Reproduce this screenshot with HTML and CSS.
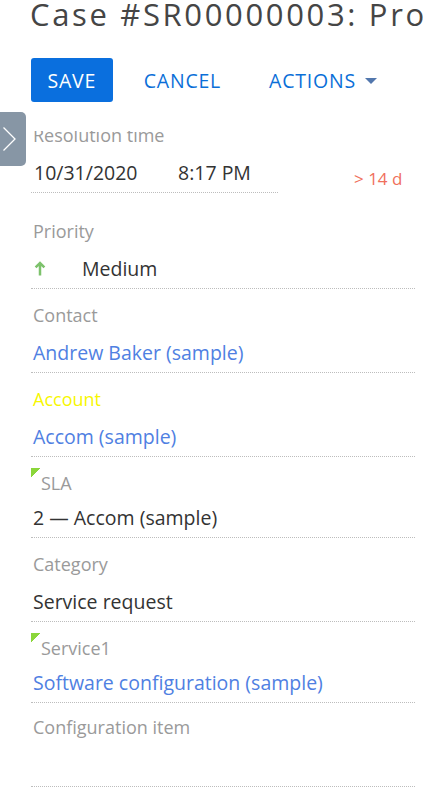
FILE: index.html
```html
<!DOCTYPE html>
<html lang="en">
<head>
<meta charset="utf-8">
<title>Case #SR00000003</title>
<link rel="stylesheet" href="styles.css">
</head>
<body>
<div class="page">
  <header class="head">
    <h1 class="title">Case #SR00000003: Problem with software configuration</h1>
    <div class="toolbar">
      <button class="btn btn-primary">SAVE</button>
      <button class="btn btn-link">CANCEL</button>
      <button class="btn btn-link">ACTIONS<span class="caret"></span></button>
    </div>
  </header>

  <button class="side-tab" aria-label="Expand">
    <svg width="26" height="54" viewBox="0 0 26 54"><polyline points="3.5,15.5 15,27 3.5,38.5" fill="none" stroke="#ffffff" stroke-width="1.3"/></svg>
  </button>

  <main class="form">
    <div class="field-res">
      <div class="label">Resolution time</div>
      <div class="res-row">
        <div class="res-input">
          <span class="res-date">10/31/2020</span>
          <span class="res-time">8:17 PM</span>
        </div>
        <span class="overdue">&gt; 14 d</span>
      </div>
    </div>

    <div class="field">
      <div class="label">Priority</div>
      <div class="value value-priority">
        <span class="prio-icon">
          <svg width="12" height="15" viewBox="0 0 12 15"><path d="M6 14.5V2M1.6 6.4L6 2L10.4 6.4" fill="none" stroke="#7dc26c" stroke-width="2.5"/></svg>
        </span>
        <span>Medium</span>
      </div>
    </div>

    <div class="field">
      <div class="label">Contact</div>
      <div class="value link">Andrew Baker (sample)</div>
    </div>

    <div class="field">
      <div class="label label-warn">Account</div>
      <div class="value link">Accom (sample)</div>
    </div>

    <div class="field field-flagged">
      <div class="label label-flagged"><span class="flag"></span><span>SLA</span></div>
      <div class="value">2 — Accom (sample)</div>
    </div>

    <div class="field">
      <div class="label">Category</div>
      <div class="value">Service request</div>
    </div>

    <div class="field field-flagged">
      <div class="label label-flagged"><span class="flag"></span><span>Service1</span></div>
      <div class="value link">Software configuration (sample)</div>
    </div>

    <div class="field field-last">
      <div class="label">Configuration item</div>
      <div class="value"></div>
    </div>
  </main>
</div>
</body>
</html>
```

FILE: styles.css
```css
html, body {
  margin: 0;
  padding: 0;
  background: #ffffff;
}

body {
  font-family: "Open Sans", "Noto Sans", sans-serif;
  color: #333333;
}

.page {
  position: relative;
  width: 423px;
  overflow: hidden;
}

.head {
  height: 131px;
  background: #ffffff;
}

.title {
  margin: 0;
  padding-left: 30px;
  font-size: 31px;
  line-height: 28px;
  font-weight: 400;
  letter-spacing: 2.65px;
  color: #454545;
  white-space: nowrap;
  overflow: hidden;
}

.toolbar {
  display: flex;
  gap: 14px;
  margin-top: 30px;
  padding-left: 31px;
}

.btn {
  height: 44px;
  padding: 0 17px;
  border: none;
  border-radius: 3px;
  background: transparent;
  font-family: "Open Sans", "Noto Sans", sans-serif;
  font-size: 19.5px;
  letter-spacing: 0.8px;
  color: #0b6fd8;
  display: flex;
  align-items: center;
  cursor: pointer;
}

.btn-primary {
  background: #0a6fde;
  color: #ffffff;
  padding: 0 16.5px;
}

.btn-link {
  padding: 0 17px;
}

.caret {
  width: 0;
  height: 0;
  margin-left: 9px;
  margin-top: 1px;
  border-left: 6px solid transparent;
  border-right: 6px solid transparent;
  border-top: 6px solid #5277ad;
}

.side-tab {
  position: absolute;
  left: 0;
  top: 112px;
  width: 26px;
  height: 54px;
  padding: 0;
  border: none;
  border-radius: 0 5px 5px 0;
  background: #8796a5;
  display: block;
}

.side-tab svg {
  display: block;
}

.form {
  overflow: hidden;
  padding: 0 8px 20px 31px;
}

.label {
  font-size: 18px;
  line-height: 24px;
  color: #9a9a9a;
  padding-left: 2px;
  white-space: nowrap;
}

.label-warn {
  color: #f7f700;
}

.label-flagged {
  display: flex;
  padding-left: 0;
}

.flag {
  width: 10px;
  height: 10px;
  margin-top: -2.5px;
  align-self: flex-start;
  background: linear-gradient(135deg, #8bd63a 50%, transparent 50%);
}

.value {
  margin-top: 12px;
  height: 28px;
  font-size: 19.5px;
  line-height: 28px;
  color: #333333;
  padding-left: 2px;
  white-space: nowrap;
}

.link {
  color: #4f80e2;
}

.field {
  padding: 14px 0 5px;
  border-bottom: 1px dotted #bdbdbd;
}

.field-flagged .value {
  margin-top: 9px;
}

.field-last {
  padding-top: 12px;
  padding-bottom: 7px;
}

.field-res {
  margin-top: -8px;
  margin-bottom: 12px;
}

.res-row {
  display: flex;
  margin-top: 11.5px;
}

.res-input {
  width: 247px;
  display: flex;
  padding-bottom: 5px;
  border-bottom: 1px dotted #bdbdbd;
  font-size: 19.5px;
  line-height: 28px;
  color: #333333;
}

.res-date {
  width: 144px;
  padding-left: 3px;
}

.overdue {
  margin-left: 76px;
  margin-top: 8px;
  font-size: 17px;
  line-height: 24px;
  color: #f0705c;
  white-space: nowrap;
}

.value-priority {
  display: flex;
  align-items: center;
}

.prio-icon {
  width: 48px;
  display: flex;
  padding-left: 1px;
}

.prio-icon svg {
  display: block;
}
```
